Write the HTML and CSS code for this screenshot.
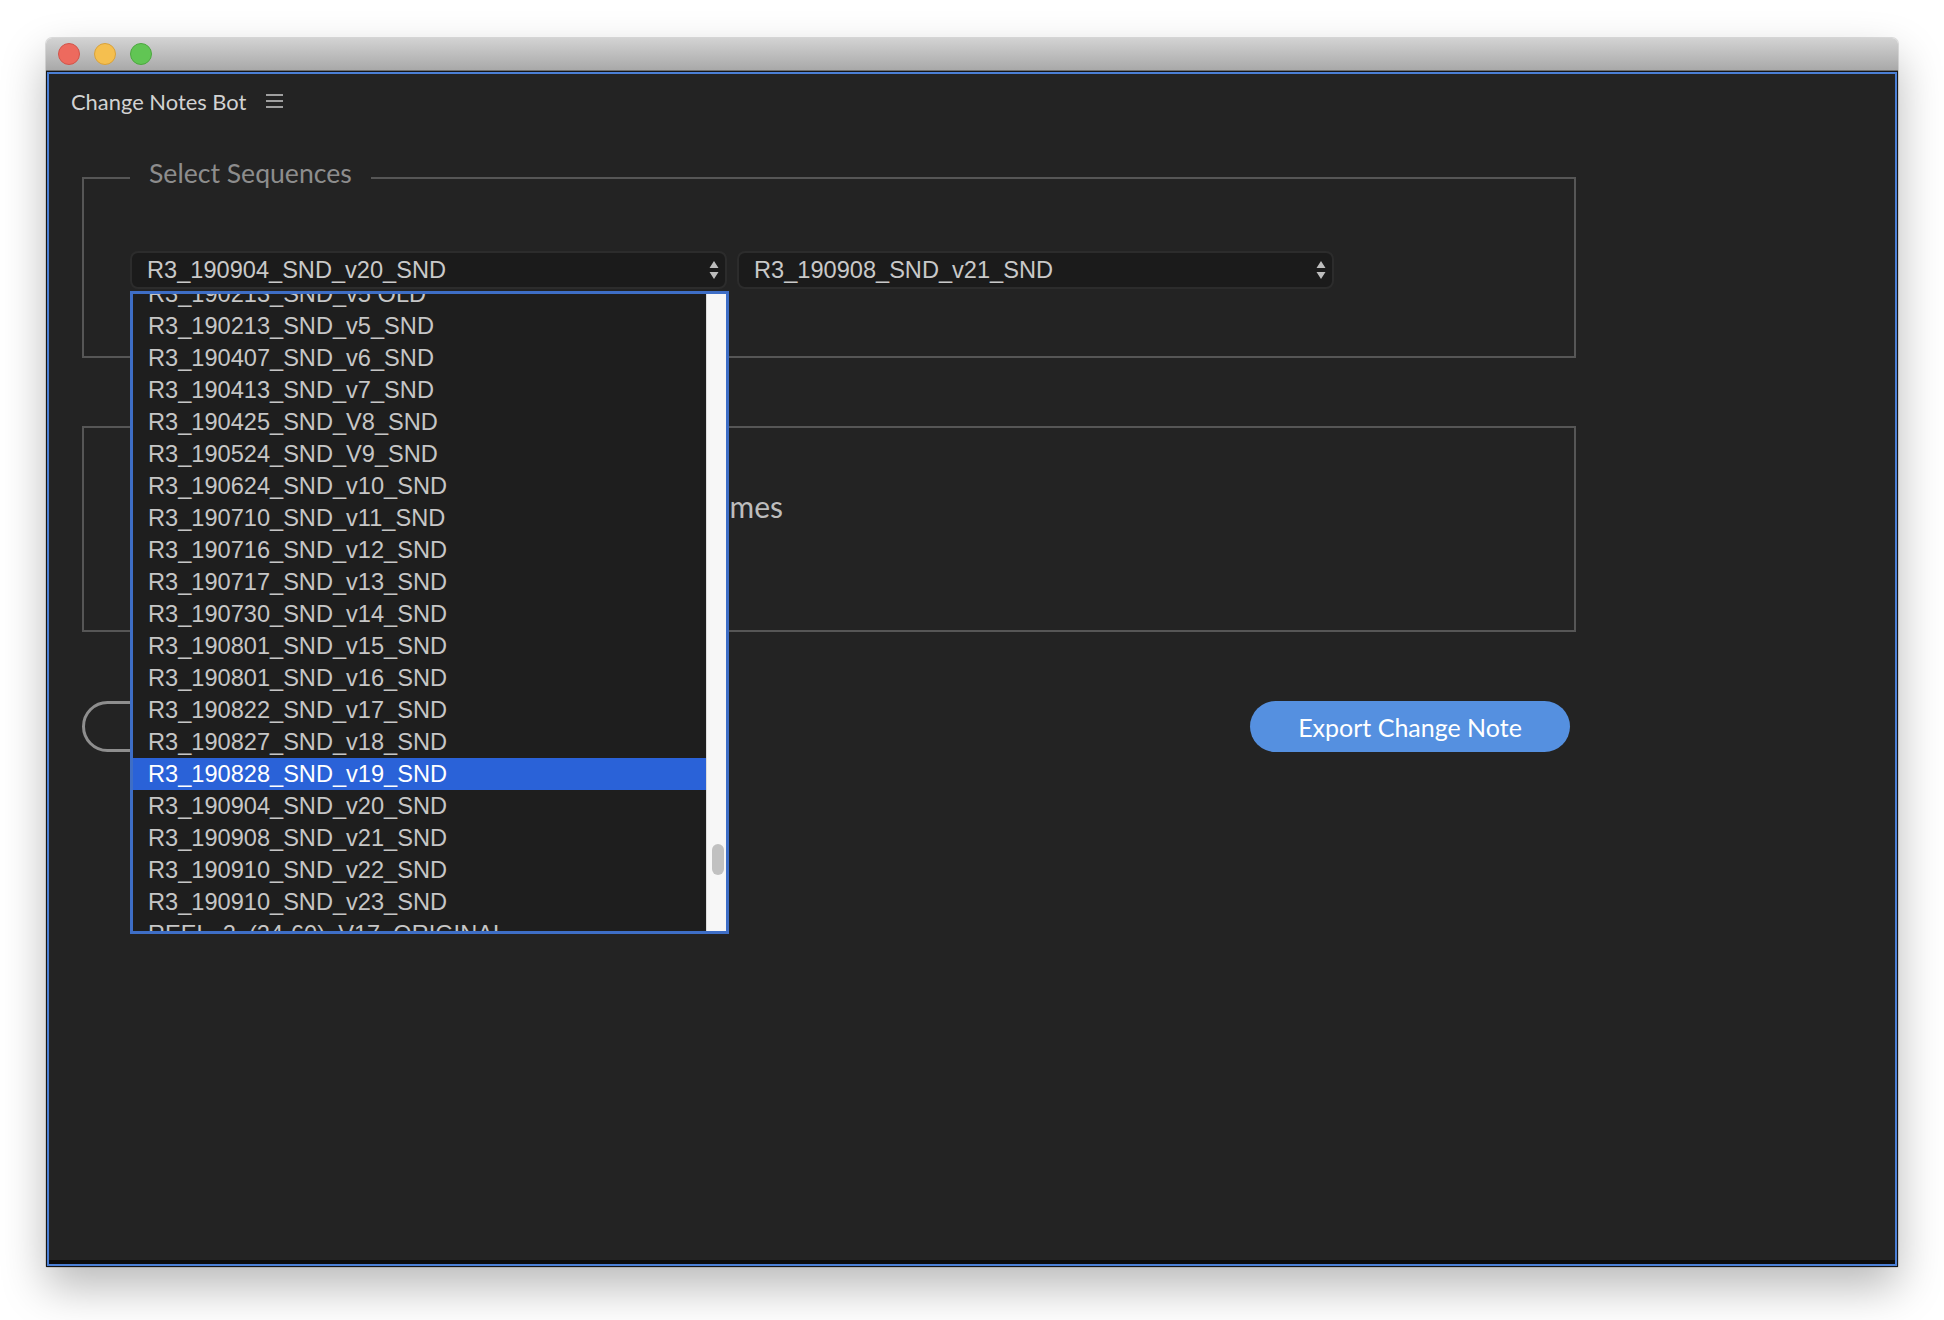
FILE: index.html
```html
<!DOCTYPE html>
<html lang="en">
<head>
<meta charset="utf-8">
<title>Change Notes Bot</title>
<link rel="stylesheet" href="styles.css">
</head>
<body>
<div class="window">
  <div class="titlebar">
    <span class="light light-red"></span>
    <span class="light light-yellow"></span>
    <span class="light light-green"></span>
  </div>
  <div class="panel">
    <header class="app-header">
      <span class="app-title">Change Notes Bot</span>
      <svg class="menu-icon" width="17" height="14" viewBox="0 0 17 14" aria-hidden="true">
        <path d="M0 1h17M0 7h17M0 13h17" stroke="#c9c9c9" stroke-width="1.6" fill="none"/>
      </svg>
    </header>

    <fieldset class="group group-seq">
      <legend class="group-legend">Select Sequences</legend>
      <div class="select-row">
        <div class="select-wrap">
          <div class="select">
            <span class="select-value">R3_190904_SND_v20_SND</span>
            <svg class="select-arrows" width="10" height="22" viewBox="0 0 10 22" aria-hidden="true"><path d="M5 2L9.5 9H0.5Z M0.5 13H9.5L5 20Z" fill="#bdbdbd"/></svg>
          </div>
          <div class="dropdown">
            <div class="dropdown-viewport">
              <ul class="options">
                <li>R3_190213_SND_v5 OLD</li>
                <li>R3_190213_SND_v5_SND</li>
                <li>R3_190407_SND_v6_SND</li>
                <li>R3_190413_SND_v7_SND</li>
                <li>R3_190425_SND_V8_SND</li>
                <li>R3_190524_SND_V9_SND</li>
                <li>R3_190624_SND_v10_SND</li>
                <li>R3_190710_SND_v11_SND</li>
                <li>R3_190716_SND_v12_SND</li>
                <li>R3_190717_SND_v13_SND</li>
                <li>R3_190730_SND_v14_SND</li>
                <li>R3_190801_SND_v15_SND</li>
                <li>R3_190801_SND_v16_SND</li>
                <li>R3_190822_SND_v17_SND</li>
                <li>R3_190827_SND_v18_SND</li>
                <li class="is-active">R3_190828_SND_v19_SND</li>
                <li>R3_190904_SND_v20_SND</li>
                <li>R3_190908_SND_v21_SND</li>
                <li>R3_190910_SND_v22_SND</li>
                <li>R3_190910_SND_v23_SND</li>
                <li>REEL_2_(24-60)_V17_ORIGINAL</li>
                <li>REEL_2_(24-60)_V18_SND</li>
              </ul>
            </div>
            <div class="scroll-track"><div class="scroll-thumb"></div></div>
          </div>
        </div>
        <div class="select">
          <span class="select-value">R3_190908_SND_v21_SND</span>
          <svg class="select-arrows" width="10" height="22" viewBox="0 0 10 22" aria-hidden="true"><path d="M5 2L9.5 9H0.5Z M0.5 13H9.5L5 20Z" fill="#bdbdbd"/></svg>
        </div>
      </div>
    </fieldset>

    <fieldset class="group group-opts">
      <legend class="group-legend">Options</legend>
      <div class="opt-row">
        <label class="opt-label">Show Clip Times</label>
      </div>
    </fieldset>

    <div class="actions">
      <button class="btn btn-outline">Compare</button>
      <button class="btn btn-primary">Export Change Note</button>
    </div>
  </div>
</div>
</body>
</html>
```

FILE: styles.css
```css
* { box-sizing: border-box; }
html, body { margin: 0; padding: 0; }
body {
  background: #ffffff;
  width: 1944px;
  height: 1320px;
  overflow: hidden;
  font-family: "Lato", "Open Sans", sans-serif;
}
.window {
  margin: 38px 0 0 46px;
  width: 1852px;
  border-radius: 6px 6px 2px 2px;
  box-shadow: 0 20px 45px rgba(0,0,0,0.28), 0 0 0 1px rgba(0,0,0,0.12);
}
.titlebar {
  height: 33px;
  border-radius: 6px 6px 0 0;
  background: linear-gradient(#d3d3d3, #a9a9a9);
  border-bottom: 1px solid #6f6f6f;
  display: flex;
  align-items: center;
  padding-left: 12px;
  gap: 14px;
}
.light {
  width: 22px; height: 22px; border-radius: 50%;
  display: block;
}
.light-red { background: #ed6a5e; border: 1px solid #d2544a; }
.light-yellow { background: #f5bf4f; border: 1px solid #d9a23a; }
.light-green { background: #61c554; border: 1px solid #4ca83f; }

.panel {
  height: 1196px;
  background: #232323;
  border: 1px solid #161616;
  box-shadow: inset 0 0 0 2px #4b7fd5, inset 0 -6px 0 #0c0c0c;
  color: #c8c8c8;
}
.app-header {
  height: 58px;
  display: flex;
  align-items: center;
  padding-left: 24px;
  gap: 20px;
}
.app-title {
  font-size: 21.9px;
  color: #d2d2d2;
}
.menu-icon { display: block; }

.group {
  margin: 0 0 0 35px;
  width: 1494px;
  border: 2px solid #565656;
  padding: 0 0 0 46px;
  min-width: 0;
}
.group-legend {
  padding: 0 19px 9px;
  font-size: 26.6px;
  line-height: 34px;
  color: #8d8d8d;
}
.group-seq {
  margin-top: 26px;
  padding-top: 52px;
  padding-bottom: 67px;
}
.select-row {
  display: flex;
  gap: 10px;
}
.select-wrap { position: relative; }
.select {
  width: 597px;
  height: 38px;
  border: 2px solid #2c2c2c;
  border-radius: 8px;
  background: #1b1b1b;
  display: flex;
  align-items: center;
  justify-content: space-between;
  padding: 0 6px 0 15px;
  font-family: "Liberation Sans", Arial, sans-serif;
  font-size: 23.6px;
  color: #c9c9c9;
}
.select-arrows { display: block; }

.dropdown {
  position: absolute;
  z-index: 5;
  top: 40px;
  left: 0;
  width: 599px;
  height: 643px;
  border: 3px solid #3e6ec6;
  background: #1e1e1e;
  display: flex;
}
.dropdown-viewport {
  flex: 1;
  overflow: hidden;
}
.options {
  list-style: none;
  margin: -16px 0 0 0;
  padding: 0;
  font-family: "Liberation Sans", Arial, sans-serif;
  font-size: 23.6px;
  color: #c6c6c6;
}
.options li {
  height: 32px;
  line-height: 32px;
  padding-left: 15px;
  white-space: nowrap;
}
.options li.is-active {
  background: #2a62d8;
  color: #ffffff;
}
.scroll-track {
  width: 20px;
  background: #f7f7f7;
  border-left: 1px solid #dcdcdc;
  padding: 550px 0 0 5px;
}
.scroll-thumb {
  width: 12px;
  height: 31px;
  border-radius: 6px;
  background: #c1c1c1;
}

.group-opts {
  margin-top: 47px;
  height: 227px;
}
.opt-row {
  width: 653px;
  padding-top: 40px;
  text-align: right;
}
.opt-label {
  font-size: 30px;
  color: #bdbdbd;
}

.actions {
  margin: 69px 0 0 35px;
  width: 1488px;
  display: flex;
  justify-content: space-between;
}
.btn {
  height: 51px;
  border-radius: 26px;
  font-family: "Lato", "Open Sans", sans-serif;
  font-size: 25px;
}
.btn-outline {
  width: 260px;
  background: transparent;
  border: 3px solid #8e8e8e;
  color: #bdbdbd;
}
.btn-primary {
  width: 320px;
  background: #5590e0;
  border: none;
  color: #ffffff;
}
```
